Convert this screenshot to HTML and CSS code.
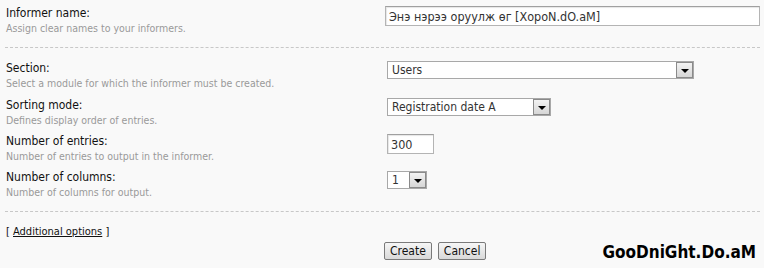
FILE: index.html
```html
<!DOCTYPE html>
<html>
  <head>
    <title>Informer</title>
    <link rel="stylesheet" href="styles.css">
  </head>
  <body>
    <form class="informer">
      <div class="row row-first">
        <div class="label-cell">
          <div class="label">Informer name:</div>
          <div class="hint">Assign clear names to your informers.</div>
        </div>
        <div class="field-cell">
          <input class="text wide" type="text" value="Энэ нэрээ оруулж өг [XopoN.dO.aM]">
        </div>
      </div>
      <div class="group">
        <div class="row">
          <div class="label-cell">
            <div class="label">Section:</div>
            <div class="hint">Select a module for which the informer must be created.</div>
          </div>
          <div class="field-cell">
            <div class="select sel-section"><span class="value">Users</span><span class="arrow"></span></div>
          </div>
        </div>
        <div class="row">
          <div class="label-cell">
            <div class="label">Sorting mode:</div>
            <div class="hint">Defines display order of entries.</div>
          </div>
          <div class="field-cell">
            <div class="select sel-sort"><span class="value">Registration date A</span><span class="arrow"></span></div>
          </div>
        </div>
        <div class="row">
          <div class="label-cell">
            <div class="label">Number of entries:</div>
            <div class="hint">Number of entries to output in the informer.</div>
          </div>
          <div class="field-cell">
            <input class="text short" type="text" value="300">
          </div>
        </div>
        <div class="row">
          <div class="label-cell">
            <div class="label">Number of columns:</div>
            <div class="hint">Number of columns for output.</div>
          </div>
          <div class="field-cell field-low">
            <div class="select sel-cols"><span class="value">1</span><span class="arrow"></span></div>
          </div>
        </div>
      </div>
      <div class="more">[ <a href="#">Additional options</a> ]</div>
      <div class="footer">
        <div class="buttons">
          <button type="button" class="btn">Create</button>
          <button type="button" class="btn">Cancel</button>
        </div>
        <div class="mark">GooDniGht.Do.aM</div>
      </div>
    </form>
  </body>
</html>
```

FILE: styles.css
```css
*{
  margin:0;
  padding:0;
  box-sizing:border-box;
}
body{
  background:#f9f9f9;
  font-family:"DejaVu Sans Condensed","DejaVu Sans",sans-serif;
  color:#111;
}
.informer{
  padding:0 4px 0 5px;
}
.row{
  display:flex;
  align-items:flex-start;
  height:36px;
}
.row-first{
  height:48px;
  padding-top:5px;
  border-bottom:1px dashed #c8c8c8;
}
.group{
  padding-top:12px;
  padding-bottom:6px;
  border-bottom:1px dashed #c8c8c8;
}
.group .row:first-child{
  height:37px;
}
.label-cell{
  width:380px;
  padding-left:1px;
}
.label{
  font-size:12px;
  line-height:16px;
}
.hint{
  font-size:10.5px;
  line-height:15px;
  color:#9a9a9a;
}
.field-cell{
  flex:1;
  padding-top:1px;
}
.field-low{
  padding-top:2px;
}
.text{
  display:block;
  height:20px;
  border:1px solid #b4b4b4;
  border-top-color:#a0a0a0;
  background:#fff;
  font-family:inherit;
  font-size:12.5px;
  color:#333;
  padding:0 3px;
  box-shadow:inset 1px 1px 1px #e6e6e6;
}
.wide{
  width:375px;
}
.short{
  width:47px;
  margin-left:2px;
}
.select{
  display:flex;
  align-items:stretch;
  height:18px;
  margin-left:2px;
  border:1px solid #a8a8a8;
  background:#fff;
  font-size:12px;
  color:#333;
}
.select .value{
  flex:1;
  padding-left:4px;
  line-height:16px;
  white-space:nowrap;
}
.select .arrow{
  width:17px;
  border:1px solid #8a8a8a;
  background:linear-gradient(#f2f2f2,#d6d6d6);
  display:flex;
  align-items:center;
  justify-content:center;
}
.select .arrow:after{
  content:"";
  border-left:4px solid transparent;
  border-right:4px solid transparent;
  border-top:4px solid #000;
  margin-top:1px;
}
.sel-section{
  width:307px;
}
.sel-sort{
  width:164px;
}
.sel-cols{
  width:40px;
}
.more{
  font-size:11px;
  line-height:15px;
  padding-top:12px;
  padding-left:1px;
}
.more a{
  color:#111;
}
.footer{
  display:flex;
  justify-content:space-between;
  align-items:flex-start;
  padding-top:3px;
}
.buttons{
  margin-left:379px;
  display:flex;
  gap:6px;
}
.btn{
  height:18px;
  padding:0 5px;
  border:1px solid #7a7a7a;
  border-radius:2px;
  background:linear-gradient(#f6f6f6,#d9d9d9);
  font-family:inherit;
  font-size:12px;
  color:#111;
}
.mark{
  font-weight:bold;
  font-size:17px;
  color:#000;
  margin-top:0;
  margin-right:4px;
}
```
